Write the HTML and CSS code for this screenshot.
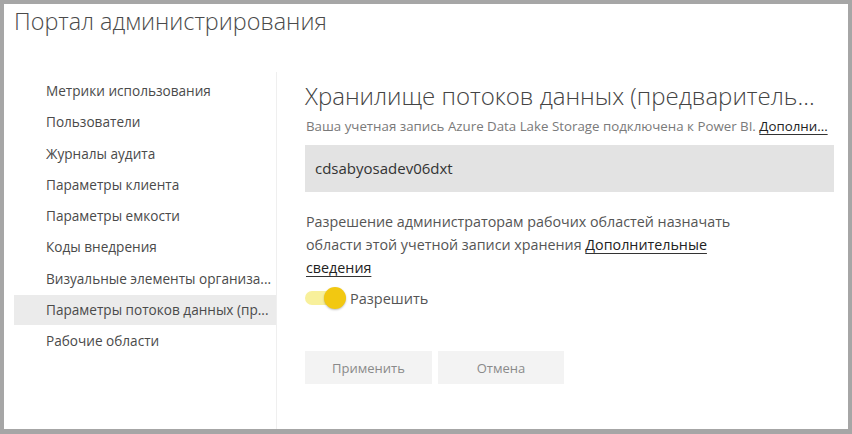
FILE: index.html
```html
<!DOCTYPE html>
<html lang="ru">
<head>
<meta charset="utf-8">
<title>Портал администрирования</title>
<link rel="stylesheet" href="styles.css">
</head>
<body>
<div class="frame">
  <header class="page-header">
    <h1 class="page-title">Портал администрирования</h1>
  </header>
  <div class="main">
    <nav class="sidebar">
      <ul class="nav-list">
        <li class="nav-item">Метрики использования</li>
        <li class="nav-item">Пользователи</li>
        <li class="nav-item">Журналы аудита</li>
        <li class="nav-item">Параметры клиента</li>
        <li class="nav-item">Параметры емкости</li>
        <li class="nav-item">Коды внедрения</li>
        <li class="nav-item">Визуальные элементы организа...</li>
        <li class="nav-item nav-item-selected">Параметры потоков данных (пр...</li>
        <li class="nav-item">Рабочие области</li>
      </ul>
    </nav>
    <section class="content">
      <h2 class="content-title">Хранилище потоков данных (предваритель...</h2>
      <p class="subtitle">Ваша учетная запись Azure Data Lake Storage подключена к Power BI. <a class="link" href="#">Дополни...</a></p>
      <div class="storage-box">cdsabyosadev06dxt</div>
      <p class="description">Разрешение администраторам рабочих областей назначать области этой учетной записи хранения <a class="link" href="#">Дополнительные</a> <a class="link" href="#">сведения</a></p>
      <div class="toggle-row">
        <span class="toggle"><span class="toggle-knob"></span></span>
        <span class="toggle-label">Разрешить</span>
      </div>
      <div class="actions">
        <button class="btn btn-apply">Применить</button>
        <button class="btn btn-cancel">Отмена</button>
      </div>
    </section>
  </div>
</div>
</body>
</html>
```
FILE: styles.css
```css
* { box-sizing: border-box; }
html, body { margin: 0; padding: 0; }
body {
  width: 852px;
  height: 434px;
  overflow: hidden;
  font-family: "Open Sans", "Noto Sans", sans-serif;
  background: #a6a6a6;
}
.frame {
  margin: 4px 4px 0 4px;
  height: 425px;
  background: #fff;
  display: flex;
  flex-direction: column;
}
.page-header {
  padding: 0 0 0 10px;
  height: 68px;
}
.page-title {
  margin: 0;
  font-size: 23.4px;
  font-weight: 300;
  color: #4a4a4a;
  line-height: 34px;
}
.main {
  flex: 1;
  display: flex;
}
.sidebar {
  width: 273px;
  border-right: 1px solid #efefef;
  padding: 3px 0 0 10px;
}
.nav-list {
  list-style: none;
  margin: 0;
  padding: 0;
}
.nav-item {
  height: 31.3px;
  line-height: 31px;
  padding-left: 32px;
  font-size: 13.6px;
  color: #4a4a4a;
  white-space: nowrap;
  overflow: hidden;
}
.nav-item-selected {
  background: #ebebeb;
  height: 30px;
  margin: 0.6px 0 0.7px;
  line-height: 30px;
}
.content {
  flex: 1;
  padding: 8px 14px 0 28px;
}
.content-title {
  margin: 0;
  font-size: 24px;
  font-weight: 300;
  color: #444;
  line-height: 32px;
  white-space: nowrap;
}
.subtitle {
  margin: 5px 0 0 1px;
  font-size: 13.3px;
  color: #7a7a7a;
  line-height: 18px;
  white-space: nowrap;
}
.link {
  color: #222;
  text-decoration: underline;
  text-decoration-color: #333;
  text-underline-offset: 3px;
  text-decoration-thickness: 1px;
}
.storage-box {
  margin-top: 10px;
  height: 47px;
  background: #e3e3e3;
  padding-left: 10px;
  line-height: 47px;
  font-size: 15px;
  color: #333;
}
.description {
  margin: 18px 0 0 1px;
  width: 440px;
  font-size: 14.3px;
  line-height: 23px;
  color: #555;
}
.toggle-row {
  margin-top: 8px;
  display: flex;
  align-items: center;
  gap: 4px;
  height: 22px;
}
.toggle {
  position: relative;
  width: 39px;
  height: 14px;
  border-radius: 7px;
  background: #f8f09b;
}
.toggle-knob {
  position: absolute;
  right: -2px;
  top: -4px;
  width: 22px;
  height: 22px;
  border-radius: 50%;
  background: #f2c811;
  box-shadow: 0 1px 2px rgba(0,0,0,0.25);
}
.toggle-label {
  font-size: 14.5px;
  color: #555;
  margin-left: 2px;
}
.actions {
  margin-top: 42px;
  display: flex;
  gap: 6px;
}
.btn {
  border: none;
  background: #f3f3f3;
  font-family: inherit;
  font-size: 13px;
  color: #8a8a8a;
  height: 33px;
  padding: 0;
}
.btn-apply { width: 127px; }
.btn-cancel { width: 126px; }
```
